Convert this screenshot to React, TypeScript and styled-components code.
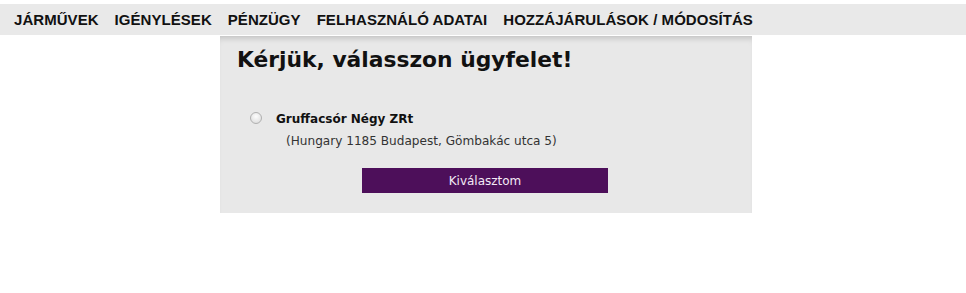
import React from "react";
import styled, { createGlobalStyle } from "styled-components";

const Global = createGlobalStyle`
  html, body { margin: 0; padding: 0; background: #fff; }
  body { font-family: "DejaVu Sans", Verdana, sans-serif; }
`;

const Page = styled.div`
  padding-top: 4px;
`;

const Nav = styled.nav`
  display: flex;
  align-items: center;
  gap: 16px;
  height: 31px;
  padding-left: 14px;
  background: #e9e9e9;
`;

const NavItem = styled.a`
  font-family: "Liberation Sans", Arial, sans-serif;
  font-weight: bold;
  font-size: 15px;
  letter-spacing: 0.05px;
  color: #111;
  text-decoration: none;
  text-transform: uppercase;
  white-space: nowrap;
`;

const Panel = styled.section`
  width: 532px;
  height: 177px;
  box-sizing: border-box;
  margin: 1px 0 0 220px;
  padding: 9px 0 0 17px;
  background: #e8e8e8;
  box-shadow: inset 0 6px 6px -4px rgba(0, 0, 0, 0.18);
`;

const Heading = styled.h1`
  margin: 0;
  font-family: "DejaVu Sans", Verdana, sans-serif;
  font-weight: bold;
  font-size: 21.8px;
  line-height: 29px;
  color: #111;
`;

const Option = styled.label`
  display: grid;
  grid-template-columns: 12px auto;
  column-gap: 14px;
  margin: 37px 0 0 13px;
  font-size: 12px;
  color: #111;
`;

const Radio = styled.span`
  width: 12px;
  height: 12px;
  margin-top: 1px;
  border-radius: 50%;
  border: 1px solid #b0b0b0;
  box-sizing: border-box;
  background: radial-gradient(circle at 50% 35%, #fdfdfd, #d8d8d8);
`;

const Name = styled.span`
  font-weight: bold;
  line-height: 16px;
`;

const Address = styled.span`
  grid-column: 2;
  margin: 6px 0 0 10px;
  font-size: 12.1px;
  line-height: 16px;
  color: #333;
`;

const Button = styled.button`
  display: block;
  width: 246px;
  height: 25px;
  margin: 19px 0 0 125px;
  border: none;
  background: #4d0f5a;
  color: #f4eaf6;
  font-family: "DejaVu Sans", Verdana, sans-serif;
  font-size: 12px;
  cursor: pointer;
`;

const items = [
  "Járművek",
  "Igénylések",
  "Pénzügy",
  "Felhasználó adatai",
  "Hozzájárulások / Módosítás",
];

export default function App() {
  return (
    <>
      <Global />
      <Page>
        <Nav>
          {items.map((t) => (
            <NavItem key={t}>{t}</NavItem>
          ))}
        </Nav>
        <Panel>
          <Heading>Kérjük, válasszon ügyfelet!</Heading>
          <Option>
            <Radio />
            <Name>Gruffacsór Négy ZRt</Name>
            <Address>(Hungary 1185 Budapest, Gömbakác utca 5)</Address>
          </Option>
          <Button>Kiválasztom</Button>
        </Panel>
      </Page>
    </>
  );
}
